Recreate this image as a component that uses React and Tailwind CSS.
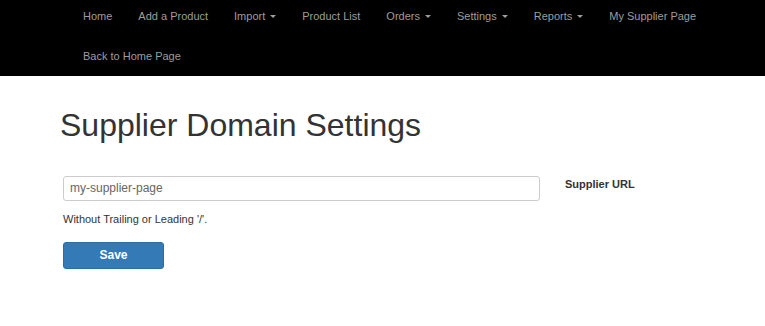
export default function App() {
  const navItems = [
    { label: 'Home' },
    { label: 'Add a Product' },
    { label: 'Import', caret: true },
    { label: 'Product List' },
    { label: 'Orders', caret: true },
    { label: 'Settings', caret: true },
    { label: 'Reports', caret: true },
    { label: 'My Supplier Page' },
    { label: 'Back to Home Page' },
  ];

  return (
    <div className="min-h-[326px] bg-white font-['Liberation_Sans',Arial,sans-serif]">
      <nav className="h-[76px] bg-black overflow-hidden">
        <ul className="flex flex-wrap gap-x-[26px] pl-[83px] pr-[20px]">
          {navItems.map((item) => (
            <li key={item.label} className="h-[40px] pt-[9px]">
              <a href="#" className="flex items-center text-[11px] leading-[15px] text-[#9d9d9d] hover:text-white">
                {item.label}
                {item.caret && (
                  <span className="ml-[5px] inline-block h-0 w-0 border-x-[3px] border-t-[3px] border-x-transparent border-t-[#9d9d9d]" />
                )}
              </a>
            </li>
          ))}
        </ul>
      </nav>

      <div className="pl-[60px] pt-[29px]">
        <h1 className="text-[32px] leading-[40px] text-[#333]">Supplier Domain Settings</h1>

        <form className="mt-[30px] pl-[3px]">
          <div className="flex items-start">
            <div className="w-[477px]">
              <input
                type="text"
                defaultValue="my-supplier-page"
                className="w-full h-[25px] px-[6px] border border-[#ccc] rounded-[3px] text-[12px] text-[#666] outline-none"
              />
              <p className="mt-[11px] text-[11px] leading-[14px] text-[#333]">
                Without Trailing or Leading '/'.
              </p>
            </div>
            <label className="ml-[25px] pt-[2px] text-[11px] leading-[14px] font-bold text-[#333]">
              Supplier URL
            </label>
          </div>
          <button
            type="submit"
            className="mt-[16px] w-[101px] h-[27px] bg-[#337ab7] border border-[#2e6da4] rounded-[3px] text-white text-[12px] font-bold"
          >
            Save
          </button>
        </form>
      </div>
    </div>
  );
}
